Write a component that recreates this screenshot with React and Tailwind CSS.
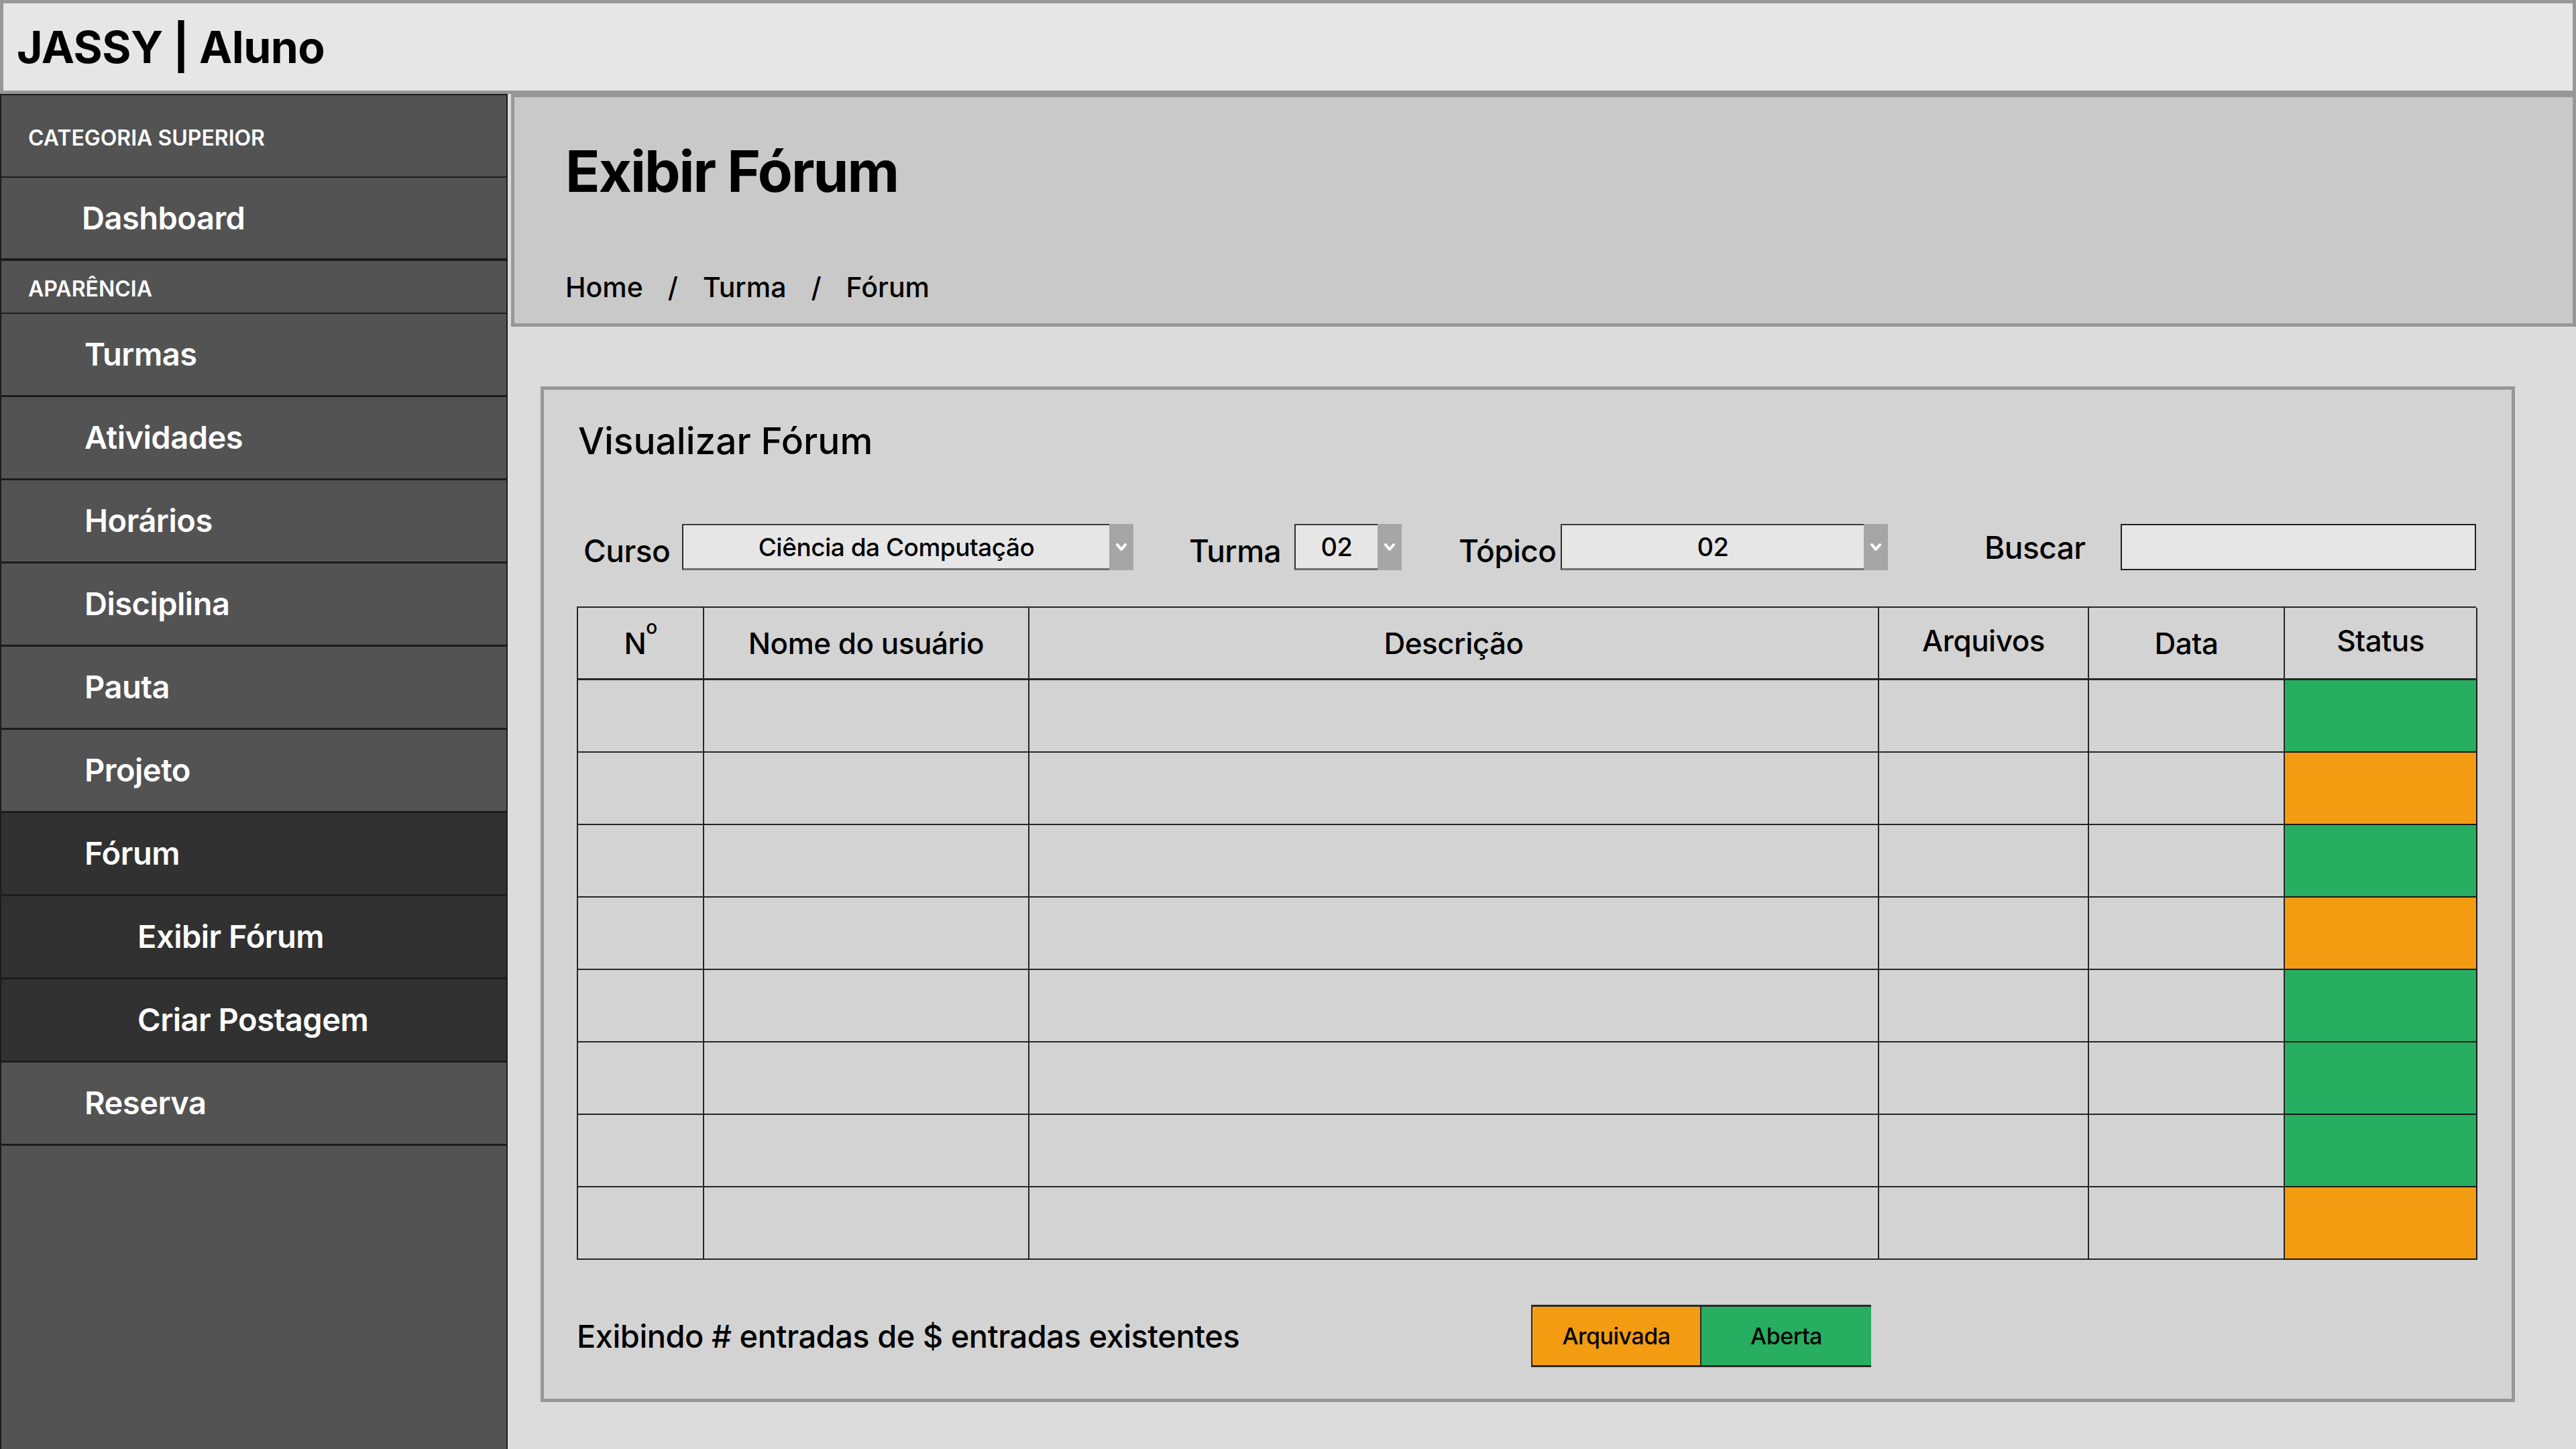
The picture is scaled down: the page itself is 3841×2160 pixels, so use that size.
import React from 'react';

const navTop = [
  { type: 'cat', label: 'CATEGORIA SUPERIOR', h: 'h-[125px]' },
  { type: 'item', label: 'Dashboard', h: 'h-[122px]' },
  { type: 'cat', label: 'APARÊNCIA', h: 'h-[81px]' },
];

const navItems = [
  { label: 'Turmas' },
  { label: 'Atividades' },
  { label: 'Horários' },
  { label: 'Disciplina' },
  { label: 'Pauta' },
  { label: 'Projeto' },
  { label: 'Fórum', active: true },
  { label: 'Exibir Fórum', active: true, sub: true },
  { label: 'Criar Postagem', active: true, sub: true },
  { label: 'Reserva' },
];

const statuses = ['green', 'orange', 'green', 'orange', 'green', 'green', 'green', 'orange'];

const cols = 'grid grid-cols-[188px_485px_1267px_313px_292px_287px]';

const Chevron = () => (
  <svg width="16" height="12" viewBox="0 0 16 12" fill="none">
    <polyline points="2,2 8,9 14,2" stroke="white" strokeWidth="4" strokeLinecap="round" strokeLinejoin="round" />
  </svg>
);

const Select = ({ value, width, text = 'text-[38px]' }) => (
  <div className={`flex h-[69px] ${width}`}>
    <div className={`flex-1 flex items-center justify-center bg-[#e6e6e6] border-l-2 border-t-2 border-b-[3px] border-l-[#2e2e2e] border-t-[#3a3a3a] border-b-[#6f6f6f] ${text} font-medium text-black`}>
      {value}
    </div>
    <div className="w-[36px] bg-[#a6a6a6] flex items-center justify-center">
      <Chevron />
    </div>
  </div>
);

export default function App() {
  return (
    <div className="w-[3841px] h-[2160px] overflow-hidden bg-[#dcdcdc] font-['Inter',sans-serif] text-black">
      {/* Top bar */}
      <header className="h-[140px] bg-[#e6e6e6] border-[5px] border-[#979797] flex items-center pl-[20px]">
        <h1 className="text-[66px] font-bold leading-none tracking-[-0.5px]">JASSY | Aluno</h1>
      </header>

      <div className="flex h-[2020px]">
        {/* Sidebar */}
        <aside className="w-[757px] shrink-0 bg-[#535353] text-white border-l-2 border-r-2 border-[#1c1c1c]">
          {navTop.map((n) =>
            n.type === 'cat' ? (
              <div key={n.label} className={`${n.h} flex items-center pl-[40px] pt-[6px] border-t-2 border-b-2 border-[#1c1c1c] text-[32px] font-semibold`}>
                {n.label}
              </div>
            ) : (
              <div key={n.label} className={`${n.h} flex items-center pl-[120px] border-b-2 border-[#1c1c1c] text-[47px] font-semibold tracking-[-0.5px]`}>
                {n.label}
              </div>
            )
          )}
          {navItems.map((n) => (
            <div
              key={n.label}
              className={`h-[124px] flex items-center border-b-[3px] border-[#1c1c1c] text-[47px] font-semibold tracking-[-0.5px] ${
                n.active ? 'bg-[#313131]' : 'bg-[#535353]'
              } ${n.sub ? 'pl-[203px]' : 'pl-[124px]'}`}
            >
              {n.label}
            </div>
          ))}
        </aside>

        {/* Main */}
        <main className="flex-1">
          <section className="h-[347px] ml-[5px] bg-[#c9c9c9] border-[5px] border-[#979797] pl-[76px] pt-[68px]">
            <h2 className="text-[85px] font-bold leading-none tracking-[-2px]">Exibir Fórum</h2>
            <nav className="mt-[110px] flex items-center gap-[37px] text-[41px] font-medium leading-none">
              <span>Home</span>
              <span>/</span>
              <span>Turma</span>
              <span>/</span>
              <span>Fórum</span>
            </nav>
          </section>

          <section className="mt-[89px] ml-[49px] w-[2944px] h-[1514px] bg-[#d3d3d3] border-[5px] border-[#979797] pl-[49px] pt-[49px]">
            <h3 className="ml-[2px] text-[55px] font-medium leading-none">Visualizar Fórum</h3>

            {/* Filters */}
            <div className="mt-[96px] flex items-center pl-[10px] text-[46px] font-medium leading-none tracking-[-0.5px]">
              <span className="w-[147px] pt-[10px]">Curso</span>
              <Select value="Ciência da Computação" width="w-[673px]" text="text-[37px]" />
              <span className="ml-[83px] w-[157px] pt-[10px]">Turma</span>
              <Select value="02" width="w-[160px]" />
              <span className="ml-[85px] w-[152px] pt-[10px]">Tópico</span>
              <Select value="02" width="w-[488px]" />
              <span className="ml-[144px] w-[203px]">Buscar</span>
              <div className="w-[530px] h-[69px] bg-[#e6e6e6] border-2 border-[#1f1f1f]" />
            </div>

            {/* Table */}
            <div className="mt-[54px] w-[2832px] border-l-2 border-t-2 border-[#262626]">
              <div className={`${cols} h-[108px]`}>
                {['Nº', 'Nome do usuário', 'Descrição', 'Arquivos', 'Data', 'Status'].map((h) => (
                  <div key={h} className="flex items-center justify-center border-r-2 border-b-[3px] border-[#262626] text-[44px] font-medium tracking-[-0.5px]">
                    {h === 'Nº' ? (
                      <span>
                        N<sup className="text-[28px] align-[16px]">o</sup>
                      </span>
                    ) : (
                      <span className={h === 'Arquivos' || h === 'Status' ? '-mt-[8px]' : ''}>{h}</span>
                    )}
                  </div>
                ))}
              </div>
              {statuses.map((s, i) => (
                <div key={i} className={`${cols} h-[108px]`}>
                  <div className="border-r-2 border-b-2 border-[#262626]" />
                  <div className="border-r-2 border-b-2 border-[#262626]" />
                  <div className="border-r-2 border-b-2 border-[#262626]" />
                  <div className="border-r-2 border-b-2 border-[#262626]" />
                  <div className="border-r-2 border-b-2 border-[#262626]" />
                  <div className={`border-r-2 border-b-2 border-[#1a1a1a] ${s === 'green' ? 'bg-[#27ae60]' : 'bg-[#f39c12]'}`} />
                </div>
              ))}
            </div>

            {/* Footer */}
            <div className="mt-[67px] flex items-center">
              <p className="w-[1423px] text-[47px] font-medium leading-none tracking-[-0.5px]">
                Exibindo # entradas de $ entradas existentes
              </p>
              <div className="flex h-[93px] border-t-[3px] border-b-[3px] border-l-2 border-[#2a2a2a] text-[34px] font-medium tracking-[-0.5px]">
                <div className="w-[252px] bg-[#f39c12] flex items-center justify-center border-r-2 border-[#2a2a2a]">Arquivada</div>
                <div className="w-[253px] bg-[#27ae60] flex items-center justify-center">Aberta</div>
              </div>
            </div>
          </section>
        </main>
      </div>
    </div>
  );
}
